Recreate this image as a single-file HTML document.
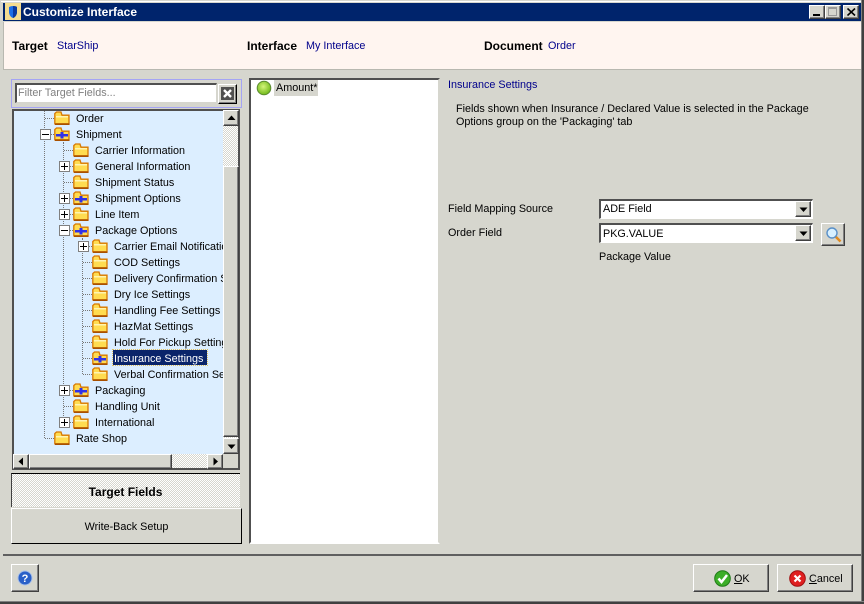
<!DOCTYPE html>
<html><head><meta charset="utf-8">
<style>
html,body{margin:0;padding:0;background:#d6d6ce}
#w{position:relative;width:864px;height:604px;overflow:hidden;background:#d6d6ce;font:10.8px/16px "Liberation Sans",sans-serif;color:#000}
#w div,#w span.a,#w svg.a{position:absolute}
.t{white-space:nowrap}
.r{border:1px solid;border-color:#fff #404040 #404040 #fff;box-sizing:border-box;background:#d6d6ce;box-shadow:inset -1px -1px 0 #808080}
.s{border:2px solid;border-color:#505050 #fff #fff #505050;box-sizing:border-box;background:#fff}
.h{background-color:#fff;background-image:repeating-conic-gradient(#d6d6ce 0 25%,#fff 0 50%);background-size:2px 2px}
.d{border-top:1px dotted #777;height:0}
.v{border-left:1px dotted #777;width:0}
.pm{width:9px;height:9px;border:1px solid #808080;background:#fff;box-sizing:content-box}
.pm i{position:absolute;left:1px;top:4px;width:7px;height:1px;background:#000}
.pm b{position:absolute;left:4px;top:1px;width:1px;height:7px;background:#000}
.bl{color:#00008b}
.b{font-weight:bold;color:#000;font-size:12px}
</style></head><body>
<div id="w">
<svg width="0" height="0" style="position:absolute"><defs>
<symbol id="f" viewBox="0 0 16 14">
<path d="M0.800 2.500V12.800H15V4.200H8L7 1H2.500Z" fill="#ffdc50" stroke="#d87800" stroke-width="1.300"/>
<path d="M2 5H14V6.500H2Z" fill="#fff4b0"/>
<path d="M1 12.400H15.500V14H1Z" fill="#a85000"/>
</symbol>
<symbol id="g" viewBox="0 0 16 14">
<path d="M0.800 2.500V12.800H15V4.200H8L7 1H2.500Z" fill="#ffdc50" stroke="#d87800" stroke-width="1.300"/>
<path d="M2 7H14V9.500H2Z" fill="#3030e8"/><path d="M6.500 5H9.500V11.500H6.500Z" fill="#3030e8"/>
<path d="M1 12.400H15.500V14H1Z" fill="#a85000"/>
</symbol>
</defs></svg>

<!-- window frame -->
<div style="left:1px;top:1px;width:861px;height:1px;background:#fff"></div>
<div style="left:861px;top:0;width:1px;height:604px;background:#808080"></div>
<div style="left:862px;top:0;width:2px;height:604px;background:#404040"></div>
<div style="left:0;top:601px;width:864px;height:1px;background:#808080"></div>
<div style="left:0;top:602px;width:864px;height:2px;background:#404040"></div>

<!-- title bar -->
<div style="left:3px;top:3px;width:858px;height:18px;background:#00246c"></div>
<div style="left:5px;top:3px;width:16px;height:17px;background:#f4dc90"></div>
<svg class="a" style="left:8px;top:5px" width="10" height="14" viewBox="0 0 10 14"><path d="M1 2Q5 0 9 2V8Q8 12 5 13Q2 12 1 8Z" fill="#1c6ee8"/><path d="M5 1Q8 1 9 2V8Q8 12 5 13Z" fill="#0a3aa0"/></svg>
<div class="t" style="left:23px;top:4px;color:#fff;font-weight:bold;font-size:12px">Customize Interface</div>
<div class="r" style="left:809px;top:5px;width:16px;height:14px"><div style="left:3px;top:8px;width:7px;height:2px;background:#000"></div></div>
<div class="r" style="left:825px;top:5px;width:16px;height:14px"><div style="left:2px;top:1px;width:9px;height:9px;border:1px solid #999;border-top-width:2px;box-sizing:border-box"></div></div>
<div class="r" style="left:843px;top:5px;width:16px;height:14px"><svg class="a" style="left:3px;top:2px" width="9" height="8"><path d="M0.500 0.500L8 7.500M8 0.500L0.500 7.500" stroke="#000" stroke-width="1.600"/></svg></div>

<!-- header -->
<div style="left:3px;top:22px;width:858px;height:47px;background:#fff5f0"></div>
<div style="left:3px;top:69px;width:858px;height:1px;background:#b8b8b0"></div>
<div style="left:3px;top:22px;width:1px;height:48px;background:#b8b8b0"></div>
<div class="t b" style="left:12px;top:38px">Target</div>
<div class="t bl" style="left:57px;top:38px">StarShip</div>
<div class="t b" style="left:247px;top:38px">Interface</div>
<div class="t bl" style="left:306px;top:38px">My Interface</div>
<div class="t b" style="left:484px;top:38px">Document</div>
<div class="t bl" style="left:548px;top:38px">Order</div>

<!-- filter -->
<div style="left:11px;top:79px;width:231px;height:29px;border:1px solid #a4a4f4;box-sizing:border-box"></div>
<div class="s" style="left:15px;top:83px;width:202px;height:20px;border-bottom:1px solid #d6d6ce;border-right:1px solid #d6d6ce"></div>
<div class="t" style="left:18px;top:85px;color:#808080">Filter Target Fields...</div>
<div class="r" style="left:218px;top:84px;width:19px;height:20px;border-color:#fff #000 #000 #fff"><div style="left:2px;top:2px;width:13px;height:13px;background:#505050"></div>
<svg class="a" style="left:4px;top:4px" width="9" height="9"><path d="M1 1L8 8M8 1L1 8" stroke="#fff" stroke-width="2.400"/></svg></div>

<!-- tree -->
<div style="left:12px;top:109px;width:228px;height:361px;border:2px solid #505050;box-sizing:border-box;background:#dceeff;overflow:hidden"></div>
<div style="left:14px;top:111px;width:209px;height:343px;overflow:hidden">
 <div class="v" style="left:30px;top:0;height:327px"></div>
 <div class="v" style="left:49px;top:31px;height:280px"></div>
 <div class="v" style="left:68px;top:127px;height:136px"></div>
 <div class="d" style="left:31px;top:7px;width:9px"></div>
 <div class="d" style="left:31px;top:23px;width:9px"></div>
 <div class="d" style="left:31px;top:327px;width:9px"></div>
 <div class="d" style="left:50px;top:39px;width:9px"></div>
 <div class="d" style="left:50px;top:55px;width:9px"></div>
 <div class="d" style="left:50px;top:71px;width:9px"></div>
 <div class="d" style="left:50px;top:87px;width:9px"></div>
 <div class="d" style="left:50px;top:103px;width:9px"></div>
 <div class="d" style="left:50px;top:119px;width:9px"></div>
 <div class="d" style="left:50px;top:279px;width:9px"></div>
 <div class="d" style="left:50px;top:295px;width:9px"></div>
 <div class="d" style="left:50px;top:311px;width:9px"></div>
 <div class="d" style="left:69px;top:135px;width:9px"></div>
 <div class="d" style="left:69px;top:151px;width:9px"></div>
 <div class="d" style="left:69px;top:167px;width:9px"></div>
 <div class="d" style="left:69px;top:183px;width:9px"></div>
 <div class="d" style="left:69px;top:199px;width:9px"></div>
 <div class="d" style="left:69px;top:215px;width:9px"></div>
 <div class="d" style="left:69px;top:231px;width:9px"></div>
 <div class="d" style="left:69px;top:247px;width:9px"></div>
 <div class="d" style="left:69px;top:263px;width:9px"></div>
 <div class="pm" style="left:26px;top:18px"><i></i></div>
 <div class="pm" style="left:45px;top:50px"><i></i><b></b></div>
 <div class="pm" style="left:45px;top:82px"><i></i><b></b></div>
 <div class="pm" style="left:45px;top:98px"><i></i><b></b></div>
 <div class="pm" style="left:45px;top:114px"><i></i></div>
 <div class="pm" style="left:64px;top:130px"><i></i><b></b></div>
 <div class="pm" style="left:45px;top:274px"><i></i><b></b></div>
 <div class="pm" style="left:45px;top:306px"><i></i><b></b></div>
 <svg class="a" style="left:40px;top:0" width="16" height="14"><use href="#f"/></svg>
 <svg class="a" style="left:40px;top:16px" width="16" height="14"><use href="#g"/></svg>
 <svg class="a" style="left:59px;top:32px" width="16" height="14"><use href="#f"/></svg>
 <svg class="a" style="left:59px;top:48px" width="16" height="14"><use href="#f"/></svg>
 <svg class="a" style="left:59px;top:64px" width="16" height="14"><use href="#f"/></svg>
 <svg class="a" style="left:59px;top:80px" width="16" height="14"><use href="#g"/></svg>
 <svg class="a" style="left:59px;top:96px" width="16" height="14"><use href="#f"/></svg>
 <svg class="a" style="left:59px;top:112px" width="16" height="14"><use href="#g"/></svg>
 <svg class="a" style="left:78px;top:128px" width="16" height="14"><use href="#f"/></svg>
 <svg class="a" style="left:78px;top:144px" width="16" height="14"><use href="#f"/></svg>
 <svg class="a" style="left:78px;top:160px" width="16" height="14"><use href="#f"/></svg>
 <svg class="a" style="left:78px;top:176px" width="16" height="14"><use href="#f"/></svg>
 <svg class="a" style="left:78px;top:192px" width="16" height="14"><use href="#f"/></svg>
 <svg class="a" style="left:78px;top:208px" width="16" height="14"><use href="#f"/></svg>
 <svg class="a" style="left:78px;top:224px" width="16" height="14"><use href="#f"/></svg>
 <svg class="a" style="left:78px;top:240px" width="16" height="14"><use href="#g"/></svg>
 <svg class="a" style="left:78px;top:256px" width="16" height="14"><use href="#f"/></svg>
 <svg class="a" style="left:59px;top:272px" width="16" height="14"><use href="#g"/></svg>
 <svg class="a" style="left:59px;top:288px" width="16" height="14"><use href="#f"/></svg>
 <svg class="a" style="left:59px;top:304px" width="16" height="14"><use href="#f"/></svg>
 <svg class="a" style="left:40px;top:320px" width="16" height="14"><use href="#f"/></svg>
 <div class="t" style="left:62px;top:0">Order</div>
 <div class="t" style="left:62px;top:16px">Shipment</div>
 <div class="t" style="left:81px;top:32px">Carrier Information</div>
 <div class="t" style="left:81px;top:48px">General Information</div>
 <div class="t" style="left:81px;top:64px">Shipment Status</div>
 <div class="t" style="left:81px;top:80px">Shipment Options</div>
 <div class="t" style="left:81px;top:96px">Line Item</div>
 <div class="t" style="left:81px;top:112px">Package Options</div>
 <div class="t" style="left:100px;top:128px">Carrier Email Notifications</div>
 <div class="t" style="left:100px;top:144px">COD Settings</div>
 <div class="t" style="left:100px;top:160px">Delivery Confirmation Settings</div>
 <div class="t" style="left:100px;top:176px">Dry Ice Settings</div>
 <div class="t" style="left:100px;top:192px">Handling Fee Settings</div>
 <div class="t" style="left:100px;top:208px">HazMat Settings</div>
 <div class="t" style="left:100px;top:224px">Hold For Pickup Settings</div>
 <div class="t" style="left:99px;top:239px;width:94px;height:15px;line-height:18px;background:#0a246a;outline:1px dotted #e0c060;color:#fff;padding-left:1px;box-sizing:border-box">Insurance Settings</div>
 <div class="t" style="left:100px;top:256px">Verbal Confirmation Settings</div>
 <div class="t" style="left:81px;top:272px">Packaging</div>
 <div class="t" style="left:81px;top:288px">Handling Unit</div>
 <div class="t" style="left:81px;top:304px">International</div>
 <div class="t" style="left:62px;top:320px">Rate Shop</div>
</div>

<!-- v scrollbar -->
<div class="h" style="left:223px;top:111px;width:15px;height:343px"></div>
<div class="r" style="left:223px;top:110px;width:16px;height:16px"><svg class="a" style="left:3px;top:4px" width="9" height="6"><path d="M4.500 0.500L8.500 5H0.500Z" fill="#000"/></svg></div>
<div class="r" style="left:223px;top:166px;width:16px;height:271px"></div>
<div class="r" style="left:223px;top:438px;width:16px;height:16px"><svg class="a" style="left:3px;top:5px" width="9" height="6"><path d="M0.500 0.500H8.500L4.500 5Z" fill="#000"/></svg></div>
<!-- h scrollbar -->
<div class="h" style="left:14px;top:454px;width:209px;height:14px"></div>
<div style="left:223px;top:454px;width:15px;height:14px;background:#d6d6ce"></div>
<div class="r" style="left:13px;top:454px;width:16px;height:15px"><svg class="a" style="left:4px;top:2px" width="6" height="9"><path d="M0.500 4.500L5 0.500V8.500Z" fill="#000"/></svg></div>
<div class="r" style="left:29px;top:454px;width:143px;height:15px"></div>
<div class="r" style="left:207px;top:454px;width:16px;height:15px"><svg class="a" style="left:5px;top:2px" width="6" height="9"><path d="M0.500 0.500L5 4.500L0.500 8.500Z" fill="#000"/></svg></div>

<!-- tabs -->
<div class="h" style="left:11px;top:473px;width:229px;height:34px;border-top:1px solid #000;border-left:1px solid #404040;box-sizing:border-box"></div>
<div class="t" style="left:11px;top:484px;width:229px;text-align:center;font-weight:bold;font-size:12px">Target Fields</div>
<div class="r" style="left:11px;top:508px;width:231px;height:36px;border-color:#fff #000 #000 #fff;box-shadow:none"></div>
<div class="t" style="left:11px;top:519px;width:231px;text-align:center;">Write-Back Setup</div>

<!-- list -->
<div class="s" style="left:249px;top:78px;width:191px;height:466px;border-right-color:#d6d6ce;border-bottom-color:#fff"></div>
<svg class="a" style="left:256px;top:80px" width="16" height="16" viewBox="0 0 16 16"><defs><radialGradient id="gr" cx=".45" cy=".4" r=".6"><stop offset="0" stop-color="#d4f57a"/><stop offset="1" stop-color="#70b818"/></radialGradient></defs><circle cx="8" cy="8" r="6.800" fill="url(#gr)" stroke="#5a8a30"/></svg>
<div class="t" style="left:274px;top:80px;width:44px;height:16px;background:#d6d6ce;padding-left:2px;box-sizing:border-box">Amount*</div>

<!-- right panel -->
<div class="t bl" style="left:448px;top:77px">Insurance Settings</div>
<div class="t" style="left:456px;top:101px">Fields shown when Insurance / Declared Value is selected in the Package</div>
<div class="t" style="left:456px;top:114px">Options group on the 'Packaging' tab</div>
<div class="t" style="left:448px;top:201px">Field Mapping Source</div>
<div class="t" style="left:448px;top:225px">Order Field</div>

<div class="s" style="left:599px;top:199px;width:214px;height:20px;border-right:1px solid #fff;border-bottom:1px solid #fff"></div>
<div class="t" style="left:603px;top:201px">ADE Field</div>
<div class="r" style="left:795px;top:201px;width:16px;height:16px"><svg class="a" style="left:3px;top:5px" width="9" height="6"><path d="M0.500 0.500H8.500L4.500 5Z" fill="#000"/></svg></div>
<div class="s" style="left:599px;top:223px;width:214px;height:20px;border-right:1px solid #fff;border-bottom:1px solid #fff"></div>
<div class="t" style="left:603px;top:226px">PKG.VALUE</div>
<div class="r" style="left:795px;top:225px;width:16px;height:16px"><svg class="a" style="left:3px;top:5px" width="9" height="6"><path d="M0.500 0.500H8.500L4.500 5Z" fill="#000"/></svg></div>
<div class="t" style="left:599px;top:249px">Package Value</div>
<div class="r" style="left:821px;top:223px;width:24px;height:23px"></div>
<svg class="a" style="left:825px;top:226px" width="17" height="17" viewBox="0 0 17 17"><path d="M10 10L15.500 15.500" stroke="#e08a20" stroke-width="2.600"/><circle cx="7" cy="7" r="5" fill="#d8f0ff" stroke="#5a90c8" stroke-width="1.400"/></svg>

<!-- footer -->
<div style="left:3px;top:554px;width:858px;height:2px;background:#606060"></div>
<div class="r" style="left:11px;top:564px;width:28px;height:28px"></div>
<svg class="a" style="left:17px;top:570px" width="16" height="16" viewBox="0 0 16 16"><circle cx="8" cy="8" r="7" fill="#2a60c8" stroke="#a8c0e8"/><text x="8" y="12" text-anchor="middle" fill="#fff" font-family="Liberation Sans" font-weight="bold" font-size="11">?</text></svg>
<div class="r" style="left:693px;top:564px;width:76px;height:28px"></div>
<svg class="a" style="left:714px;top:570px" width="17" height="17" viewBox="0 0 17 17"><circle cx="8.500" cy="8.500" r="7.800" fill="#3cae28" stroke="#1f7a18"/><path d="M4.500 8.500L7.500 12L13 5" fill="none" stroke="#fff" stroke-width="2.500"/></svg>
<div class="t" style="left:734px;top:571px"><u>O</u>K</div>
<div class="r" style="left:777px;top:564px;width:76px;height:28px"></div>
<svg class="a" style="left:789px;top:570px" width="17" height="17" viewBox="0 0 17 17"><circle cx="8.500" cy="8.500" r="7.800" fill="#e02020" stroke="#a01010"/><path d="M5.500 5.500L11.500 11.500M11.500 5.500L5.500 11.500" stroke="#fff" stroke-width="2.200"/></svg>
<div class="t" style="left:809px;top:571px"><u>C</u>ancel</div>
</div>
</body></html>
